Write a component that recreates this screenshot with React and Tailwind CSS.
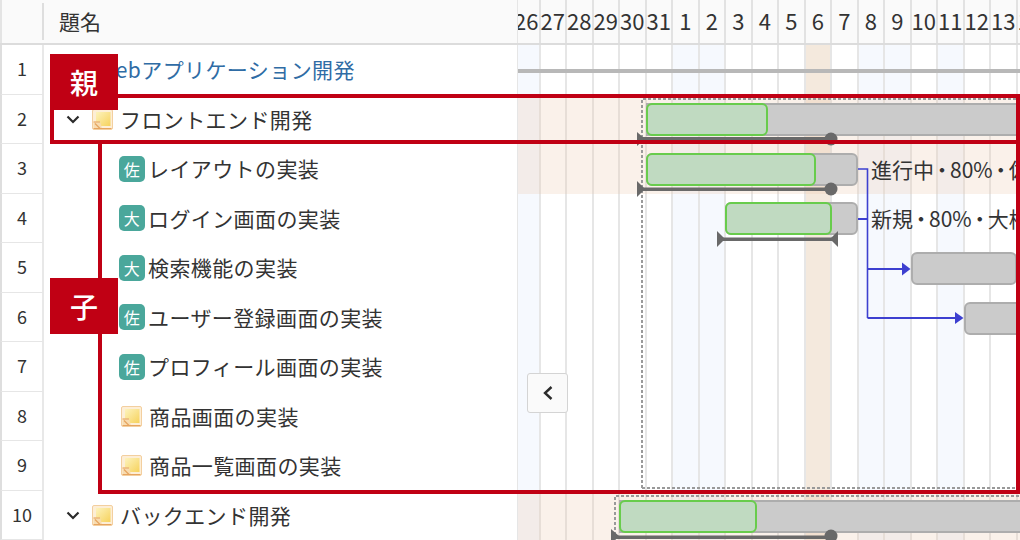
import React from "react";

const FONT = '"Noto Sans CJK JP", "Noto Sans", sans-serif';
const days = ["27","28","29","30","31","1","2","3","4","5","6","7","8","9","10","11","12","13","14"];
const weekend = new Set(["1","2","8","9","11"]);

function NoteIcon() {
  return (
    <svg width="21" height="21" viewBox="0 0 21 21" className="shrink-0">
      <defs>
        <linearGradient id="n" x1="0" y1="0" x2="1" y2="1">
          <stop offset="0" stopColor="#fdf3bd" />
          <stop offset="1" stopColor="#f6d25c" />
        </linearGradient>
      </defs>
      <rect x="0.5" y="0.5" width="20" height="20" rx="1.5" fill="#fdeed6" stroke="#f3cf9f" />
      <rect x="4" y="3" width="14.5" height="14" fill="url(#n)" />
      <path d="M1.5 12.5H8L10 19.5H1.5Z" fill="#f8dcb0" />
      <path d="M1.5 13H8M1.5 19.5H19.5M3 14.5L8 19.5" stroke="#e6a460" strokeWidth="1.2" fill="none" />
    </svg>
  );
}

function Chevron() {
  return (
    <svg width="14" height="9" viewBox="0 0 14 9" className="shrink-0">
      <path d="M1.5 1.5L7 7L12.5 1.5" fill="none" stroke="#2b2b2b" strokeWidth="2.2" />
    </svg>
  );
}

function Avatar({ c }) {
  return (
    <span className="w-[26px] h-[26px] shrink-0 -mr-[4px] rounded-[5px] bg-[#4aa79b] text-white text-[16px] leading-[26px] text-center">
      {c}
    </span>
  );
}

const rows = [
  { n: 1, pl: "pl-[53px]", text: "Webアプリケーション開発", color: "text-[#2f6ca5]" },
  { n: 2, pl: "pl-[22px]", text: "フロントエンド開発", chev: true, note: true },
  { n: 3, pl: "pl-[75px]", text: "レイアウトの実装", av: "佐" },
  { n: 4, pl: "pl-[75px]", text: "ログイン画面の実装", av: "大" },
  { n: 5, pl: "pl-[75px]", text: "検索機能の実装", av: "大" },
  { n: 6, pl: "pl-[75px]", text: "ユーザー登録画面の実装", av: "佐" },
  { n: 7, pl: "pl-[75px]", text: "プロフィール画面の実装", av: "佐" },
  { n: 8, pl: "pl-[77px]", text: "商品画面の実装", note: true },
  { n: 9, pl: "pl-[77px]", text: "商品一覧画面の実装", note: true },
  { n: 10, pl: "pl-[22px]", text: "バックエンド開発", chev: true, note: true },
];

function TreeRow({ r }) {
  return (
    <div className="flex h-[49.5px]">
      <div className="w-[44px] shrink-0 flex items-center justify-center text-[18px] text-[#333] bg-white border-l-2 border-l-[#dedede] border-b border-b-[#e6e6e6] border-r-2 border-r-[#e8e8e8] pb-[1px]">
        {r.n}
      </div>
      <div className={`flex-1 flex items-center gap-[7px] text-[21px] whitespace-nowrap tracking-[0.4px] ${r.pl} ${r.color || "text-[#333]"}`}>
        {r.chev && <span className="mr-[5px] flex"><Chevron /></span>}
        {r.note && <NoteIcon />}
        {r.av && <Avatar c={r.av} />}
        <span>{r.text}</span>
      </div>
    </div>
  );
}

function Bar({ x, y, w, h = 33, rounded = true, cls }) {
  return (
    <div
      className={`absolute border-2 ${rounded ? "rounded-[6px]" : ""} ${cls}`}
      style={{ left: x, top: y, width: w, height: h }}
    />
  );
}

function Dot() {
  return <span className="-mx-[2.5px]">・</span>;
}

const GRAY = "bg-[#cbcbcb] border-[#adadad]";
const GREEN = "bg-[#c0dac1] border-[#68cc4c]";

export default function App() {
  return (
    <div className="relative w-[1020px] h-[540px] overflow-hidden bg-white" style={{ fontFamily: FONT }}>
      {/* header */}
      <div className="flex h-[45px] bg-[#fafafa] border-b-2 border-[#dcdcdc]">
        <div className="w-[518px] shrink-0 flex items-center border-l-2 border-l-[#e4e4e4] border-r border-r-[#e6e6e6]">
          <div className="w-[42px] h-[37px] border-r-2 border-[#dedede]" />
          <div className="pl-[15px] text-[21px] text-[#333]">題名</div>
        </div>
        <div className="flex-1 flex overflow-hidden text-[22px] text-[#333]">
          <div className="w-[22.5px] shrink-0 flex justify-end overflow-hidden items-center border-r-2 border-[#e2e2e2] pb-[2px]">26</div>
          {days.map((d) => (
            <div key={d} className="w-[26.5px] shrink-0 flex justify-center items-center whitespace-nowrap border-r-2 border-[#e2e2e2] pb-[2px]">
              {d}
            </div>
          ))}
        </div>
      </div>

      {/* body */}
      <div className="flex">
        <div className="w-[518px] shrink-0 border-r border-[#e6e6e6]">
          {rows.map((r) => <TreeRow key={r.n} r={r} />)}
        </div>

        <div className="relative flex-1 h-[495px] overflow-hidden">
          {/* columns */}
          <div className="flex h-full">
            <div className="w-[22.5px] shrink-0 border-r-2 border-[#e6e6e6] bg-[#f6f9fe]" />
            {days.map((d) => (
              <div
                key={d}
                className={`w-[26.5px] shrink-0 border-r-2 border-[#e6e6e6] ${
                  d === "6" ? "bg-[#f4e9dd]" : weekend.has(d) ? "bg-[#f6f9fe]" : "bg-white"
                }`}
              />
            ))}
          </div>

          {/* highlighted rows */}
          <div className="absolute left-0 right-0 top-[49.5px] h-[99px] bg-[#ebc7ab]/25" />
          <div className="absolute left-0 right-0 top-[447px] h-[50px] bg-[#ebc7ab]/25" />

          {/* row 1 summary line */}
          <div className="absolute left-0 right-0 top-[24px] h-[3.5px] bg-[#b8b8b8]" />

          {/* dashed group outlines */}
          <svg className="absolute left-0 top-0" width="502" height="495" viewBox="0 0 502 495">
            <path d="M124 443V54H502M124 443H502" fill="none" stroke="#999" strokeWidth="2" strokeDasharray="3 2" />
            <path d="M97 495V451H502" fill="none" stroke="#999" strokeWidth="2" strokeDasharray="3 2" />
          </svg>

          {/* bars */}
          <Bar x={128} y={58} w={400} rounded={false} cls={GRAY} />
          <Bar x={128} y={58} w={122} cls={GREEN} />
          <Bar x={128} y={108} w={212} cls={GRAY} />
          <Bar x={128} y={108} w={170} cls={GREEN} />
          <Bar x={207} y={157} w={133} cls={GRAY} />
          <Bar x={207} y={157} w={107} cls={GREEN} />
          <Bar x={393} y={207} w={106} h={32.5} cls={GRAY} />
          <Bar x={446} y={257} w={80} h={32.5} cls={GRAY} />
          <Bar x={101} y={455} w={440} rounded={false} cls={GRAY} />
          <Bar x={101} y={455} w={138} cls={GREEN} />

          {/* labels */}
          <div className="absolute left-[353px] top-[108px] text-[21px] leading-[32px] text-[#333] whitespace-nowrap">進行中<Dot />80%<Dot />佐藤</div>
          <div className="absolute left-[353px] top-[157px] text-[21px] leading-[32px] text-[#333] whitespace-nowrap">新規<Dot />80%<Dot />大橋</div>

          {/* progress lines, connectors */}
          <svg className="absolute left-0 top-0" width="502" height="495" viewBox="0 0 502 495">
            <path d="M340 124H349.5V273M340 174H349.5" fill="none" stroke="#3d40d0" strokeWidth="1.6" />
            <path d="M340 174H349.5M349.5 224H385M349.5 273H438" fill="none" stroke="#3d40d0" strokeWidth="2" />
            <path d="M384 217.5L392.5 224L384 230.5Z" fill="#3d40d0" />
            <path d="M437 267L445.5 273L437 279Z" fill="#3d40d0" />
            <g fill="#696969" stroke="none">
              <rect x="120" y="92" width="193" height="3" />
              <circle cx="313" cy="94" r="6.5" />
              <path d="M119 87L127 94L119 101Z" />
              <rect x="120" y="142.5" width="193" height="3.5" />
              <circle cx="313" cy="144" r="6.5" />
              <path d="M119 136L127 144L119 152Z" />
              <rect x="205" y="192.5" width="110" height="3.5" />
              <path d="M199 186L207 194L199 202Z" />
              <path d="M320 186L312 194L320 202Z" />
              <rect x="96" y="490.5" width="217" height="3.5" />
              <circle cx="313" cy="491" r="6.5" />
              <path d="M93 484L101 491L93 498Z" />
            </g>
          </svg>

          {/* collapse button */}
          <button className="absolute left-[9px] top-[328px] w-[41px] h-[40px] flex items-center justify-center rounded-[3px] bg-[#fafafa] border border-[#d4d4d4]">
            <svg width="12" height="16" viewBox="0 0 12 16">
              <path d="M9.5 2L3 8L9.5 14" fill="none" stroke="#2b2b2b" strokeWidth="2.4" />
            </svg>
          </button>
        </div>
      </div>

      {/* annotation overlays */}
      <div className="absolute left-[50px] top-[94px] w-[970px] h-[50px] border-4 border-[#c00014]" />
      <div className="absolute left-[98px] top-[140px] w-[922px] h-[354px] border-4 border-[#c00014]" />
      <div className="absolute left-[50px] top-[54px] w-[68px] h-[56px] bg-[#c00014] flex items-center justify-center text-white text-[28px] font-medium">親</div>
      <div className="absolute left-[50px] top-[278px] w-[68px] h-[56px] bg-[#c00014] flex items-center justify-center text-white text-[28px] font-medium">子</div>
    </div>
  );
}
